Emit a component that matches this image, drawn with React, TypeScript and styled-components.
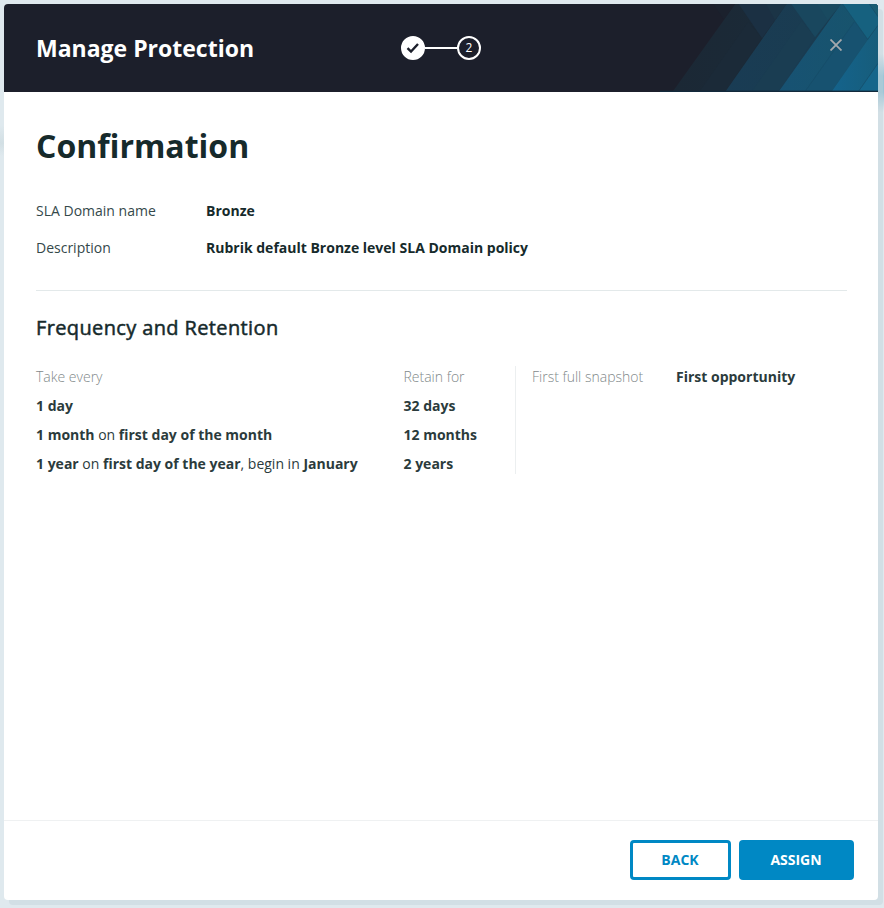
import React from "react";
import styled, { createGlobalStyle } from "styled-components";

const GlobalStyle = createGlobalStyle`
  * { box-sizing: border-box; }
  body {
    margin: 0;
    background:
      linear-gradient(180deg, transparent 54px, #9bc6d8 76px, #9bc6d8 92px, transparent 112px) right top / 6px 908px no-repeat,
      linear-gradient(180deg, transparent 125px, #d2dfe4 143px, transparent 156px) left top / 4px 908px no-repeat,
      #dfe9ee;
    font-family: "Open Sans", "Noto Sans", sans-serif;
    color: #162a2b;
  }
`;

const Page = styled.main`
  height: 908px;
  padding: 4px 6px 8px 4px;
`;

const Dialog = styled.section`
  height: 896px;
  display: flex;
  flex-direction: column;
  background: #fff;
  border-radius: 4px;
  box-shadow: 5px 5px 0 rgba(190, 208, 214, 0.4);
`;

const Header = styled.header`
  position: relative;
  flex: none;
  height: 88px;
  padding: 0 32px;
  display: grid;
  grid-template-columns: 1fr 80px 1fr;
  align-items: center;
  background: #1c1f2b;
  border-radius: 4px 4px 0 0;
  overflow: hidden;
`;

const Pattern = styled.svg`
  position: absolute;
  top: 0;
  right: 0;
  width: 218px;
  height: 88px;
`;

const Title = styled.h2`
  margin: 0;
  font-size: 23px;
  line-height: 32px;
  font-weight: 700;
  color: #fff;
  white-space: nowrap;
`;

const Steps = styled.div`
  display: flex;
  align-items: center;
`;

const Step = styled.span<{ $done?: boolean }>`
  width: 24px;
  height: 24px;
  flex: none;
  display: flex;
  align-items: center;
  justify-content: center;
  border: 2px solid #fff;
  border-radius: 50%;
  background: ${(p) => (p.$done ? "#fff" : "transparent")};
  color: #fff;
  font-size: 12px;
  line-height: 20px;
`;

const StepLine = styled.span`
  flex: 1;
  height: 2px;
  background: #fff;
`;

const CloseButton = styled.button`
  position: relative;
  justify-self: end;
  width: 20px;
  height: 20px;
  margin-bottom: 6px;
  padding: 0;
  border: 0;
  background: none;
  display: flex;
  align-items: center;
  justify-content: center;
`;

const Body = styled.div`
  flex: 1;
  padding: 30px 31px 0 32px;
`;

const Heading = styled.h1`
  margin: 0 0 29px;
  font-size: 32px;
  line-height: 48px;
  font-weight: 700;
`;

const Details = styled.dl`
  margin: 0;
  padding-bottom: 30px;
  display: grid;
  grid-template-columns: 170px 1fr;
  row-gap: 13px;
  border-bottom: 1px solid #e3e9ea;
  font-size: 14px;
  line-height: 24px;
`;

const Label = styled.dt`
  color: #34484a;
`;

const Value = styled.dd`
  margin: 0;
  font-weight: 700;
`;

const SectionTitle = styled.h3`
  margin: 22px 0 23px;
  font-size: 20px;
  line-height: 30px;
  font-weight: 400;
  letter-spacing: 0.37px;
  -webkit-text-stroke: 0.5px currentColor;
`;

const Schedule = styled.div`
  display: grid;
  grid-template-columns: 367.5px 111.5px 1fr;
  font-size: 14px;
  line-height: 21px;
  color: #2b3b3c;
`;

const Column = styled.div`
  display: flex;
  flex-direction: column;
  gap: 8px;
`;

const Muted = styled.span`
  color: #7f898a;
  font-weight: 300;
`;

const Rule = styled.div`
  font-weight: 400;
`;

const Snapshot = styled.div`
  display: grid;
  grid-template-columns: 144px 1fr;
  padding-left: 16px;
  border-left: 1px solid #eceff0;
`;

const Footer = styled.footer`
  height: 80px;
  padding: 0 24px 1px;
  display: flex;
  align-items: center;
  justify-content: flex-end;
  gap: 8px;
  border-top: 1px solid #eff1f2;
`;

const Button = styled.button<{ $primary?: boolean }>`
  width: ${(p) => (p.$primary ? 115 : 101)}px;
  height: 40px;
  padding: 0 1px 2px 0;
  border: 3px solid #0088c4;
  border-radius: 4px;
  background: ${(p) => (p.$primary ? "#0088c4" : "#fff")};
  color: ${(p) => (p.$primary ? "#fff" : "#0088c4")};
  font-family: inherit;
  font-size: 14px;
  font-weight: 700;
`;

const HeaderPattern = () => (
  <Pattern viewBox="0 12 654 264" preserveAspectRatio="none" aria-hidden="true">
    <defs>
      <linearGradient id="band1" x1="0" x2="1"><stop offset="0" stopColor="#1b2835" /><stop offset="1" stopColor="#1b2c3a" /></linearGradient>
      <linearGradient id="band2" x1="0" x2="1"><stop offset="0" stopColor="#193c54" /><stop offset="1" stopColor="#1b3b4e" /></linearGradient>
      <linearGradient id="band3" x1="0" x2="1"><stop offset="0" stopColor="#175273" /><stop offset="1" stopColor="#18546b" /></linearGradient>
      <linearGradient id="band4" x1="0" x2="1"><stop offset="0" stopColor="#14638c" /><stop offset="1" stopColor="#175d7b" /></linearGradient>
    </defs>
    <path d="M160 12H226L192 59Z" fill="#1b212d" />
    <path d="M40 272 226 12H654V276H40Z" fill="url(#band1)" />
    <path d="M120 272 265 65 306 115 198 272Z" fill="#1b2a38" />
    <path d="M236 12H380L306 115Z" fill="#1b3043" />
    <path d="M318 12H380L345 60Z" fill="#1b3446" />
    <path d="M198 272 380 12H654V276H198Z" fill="url(#band2)" />
    <path d="M277 272 425 62 465 112 358 272Z" fill="#1a3d52" />
    <path d="M394 12H543L465 112Z" fill="#19475e" />
    <path d="M472 12H543L503 60Z" fill="#194a60" />
    <path d="M358 272 543 12H654V276H358Z" fill="url(#band3)" />
    <path d="M437 272 583 65 623 118 517 272Z" fill="#175270" />
    <path d="M548 12H654V76L623 118Z" fill="#16617f" />
    <path d="M628 12H654V50Z" fill="#195c72" />
    <path d="M517 272 654 76V276H517Z" fill="url(#band4)" />
    <path d="M597 272 654 190V276H597Z" fill="#15668b" />
    <path d="M437 272 583 65M597 272 654 190M548 12 623 118 654 76M628 12 654 50" fill="none" stroke="#164b66" strokeWidth="2" />
    <rect y="272" width="654" height="4" fill="#12293b" />
  </Pattern>
);

export default function App() {
  return (
    <>
      <GlobalStyle />
      <Page>
        <Dialog role="dialog">
          <Header>
            <HeaderPattern />
            <Title>Manage Protection</Title>
            <Steps>
              <Step $done>
                <svg width="14" height="12" viewBox="0 0 14 12">
                  <path d="M1.5 6.2 5 9.5 12 2" fill="none" stroke="#1c1f2b" strokeWidth="2.4" />
                </svg>
              </Step>
              <StepLine />
              <Step>2</Step>
            </Steps>
            <CloseButton aria-label="Close">
              <svg width="12" height="12" viewBox="0 0 12 12">
                <path d="M.5.5 11.5 11.5M11.5.5.5 11.5" stroke="#a5a9ad" strokeWidth="1.8" />
              </svg>
            </CloseButton>
          </Header>
          <Body>
            <Heading>Confirmation</Heading>
            <Details>
              <Label>SLA Domain name</Label>
              <Value>Bronze</Value>
              <Label>Description</Label>
              <Value>Rubrik default Bronze level SLA Domain policy</Value>
            </Details>
            <SectionTitle>Frequency and Retention</SectionTitle>
            <Schedule>
              <Column>
                <Muted>Take every</Muted>
                <Rule><b>1 day</b></Rule>
                <Rule><b>1 month</b> on <b>first day of the month</b></Rule>
                <Rule><b>1 year</b> on <b>first day of the year</b>, begin in <b>January</b></Rule>
              </Column>
              <Column>
                <Muted>Retain for</Muted>
                <b>32 days</b>
                <b>12 months</b>
                <b>2 years</b>
              </Column>
              <Snapshot>
                <Muted>First full snapshot</Muted>
                <b>First opportunity</b>
              </Snapshot>
            </Schedule>
          </Body>
          <Footer>
            <Button>BACK</Button>
            <Button $primary>ASSIGN</Button>
          </Footer>
        </Dialog>
      </Page>
    </>
  );
}
